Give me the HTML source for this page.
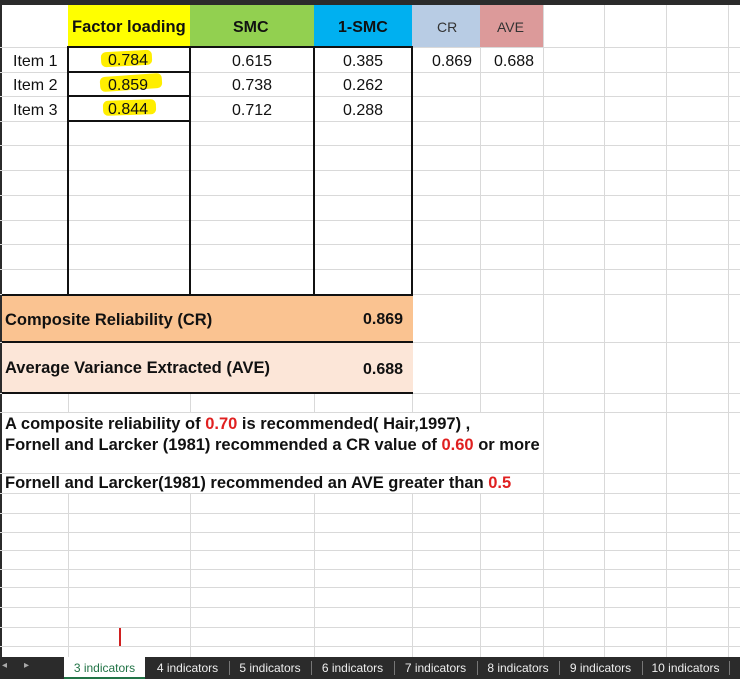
<!DOCTYPE html>
<html><head><style>
body{margin:0;width:740px;height:679px;overflow:hidden;background:#fff;font-family:"Liberation Sans",Arial,sans-serif;position:relative}
.a{position:absolute}
.h{position:absolute;left:0;width:740px;height:1px;background:#d9d9d9}
.v{position:absolute;top:5px;width:1px;height:652px;background:#d9d9d9}
.t{position:absolute;font-size:16px;color:#111;white-space:nowrap}
.b{font-weight:bold}
.r{color:#e02020}
.tab{position:absolute;top:660px;font-size:12px;color:#eee;height:19px;line-height:16px;text-align:center}
</style></head><body>
<div class="a" style="left:0;top:0;width:740px;height:5px;background:#2b2b2b"></div>
<div class="a" style="left:0;top:0;width:2px;height:660px;background:#2b2b2b"></div>
<div class="h" style="top:47px"></div><div class="h" style="top:72px"></div><div class="h" style="top:96px"></div><div class="h" style="top:121px"></div><div class="h" style="top:145px"></div><div class="h" style="top:170px"></div><div class="h" style="top:195px"></div><div class="h" style="top:220px"></div><div class="h" style="top:244px"></div><div class="h" style="top:269px"></div><div class="h" style="top:294px"></div><div class="h" style="top:342px"></div><div class="h" style="top:393px"></div><div class="h" style="top:412px"></div><div class="h" style="top:473px"></div><div class="h" style="top:493px"></div><div class="h" style="top:513px"></div><div class="h" style="top:532px"></div><div class="h" style="top:550px"></div><div class="h" style="top:569px"></div><div class="h" style="top:587px"></div><div class="h" style="top:607px"></div><div class="h" style="top:627px"></div><div class="h" style="top:646px"></div>
<div class="v" style="left:68px"></div><div class="v" style="left:190px"></div><div class="v" style="left:314px"></div><div class="v" style="left:412px"></div><div class="v" style="left:480px"></div><div class="v" style="left:543px"></div><div class="v" style="left:604px"></div><div class="v" style="left:666px"></div><div class="v" style="left:728px"></div>
<div class="a" style="left:68px;top:5px;width:122px;height:42px;background:#ffff00"></div>
<div class="a" style="left:190px;top:5px;width:124px;height:42px;background:#92d050"></div>
<div class="a" style="left:314px;top:5px;width:98px;height:42px;background:#00b0f0"></div>
<div class="a" style="left:412px;top:5px;width:68px;height:42px;background:#b8cce4"></div>
<div class="a" style="left:480px;top:5px;width:63px;height:42px;background:#dc9a9a"></div>
<div class="t b" style="left:72px;top:18px;font-size:16.5px">Factor loading</div>
<div class="t b" style="left:233px;top:19px">SMC</div>
<div class="t b" style="left:338px;top:19px">1-SMC</div>
<div class="t" style="left:437px;top:19px;font-size:14px;color:#333">CR</div>
<div class="t" style="left:497px;top:19px;font-size:14px;color:#333">AVE</div>
<div class="a" style="left:67px;top:46px;width:346px;height:2px;background:#111"></div>
<div class="a" style="left:67px;top:46px;width:2px;height:249px;background:#111"></div>
<div class="a" style="left:189px;top:46px;width:2px;height:249px;background:#111"></div>
<div class="a" style="left:313px;top:46px;width:2px;height:249px;background:#111"></div>
<div class="a" style="left:411px;top:46px;width:2px;height:249px;background:#111"></div>
<div class="a" style="left:67px;top:71px;width:124px;height:2px;background:#111"></div>
<div class="a" style="left:67px;top:95px;width:124px;height:2px;background:#111"></div>
<div class="a" style="left:67px;top:120px;width:124px;height:2px;background:#111"></div>
<div class="a" style="left:101px;top:51px;width:51px;height:15px;background:#ffee00;border-radius:5px;transform:rotate(-3deg)"></div>
<div class="a" style="left:100px;top:75px;width:62px;height:15px;background:#ffee00;border-radius:5px;transform:rotate(-4deg)"></div>
<div class="a" style="left:103px;top:100px;width:53px;height:15px;background:#ffee00;border-radius:5px;transform:rotate(-2deg)"></div>
<div class="t" style="left:13px;top:53px">Item 1</div>
<div class="t" style="left:13px;top:77px">Item 2</div>
<div class="t" style="left:13px;top:102px">Item 3</div>
<div class="t" style="left:108px;top:52px">0.784</div>
<div class="t" style="left:108px;top:77px">0.859</div>
<div class="t" style="left:108px;top:101px">0.844</div>
<div class="t" style="left:232px;top:53px">0.615</div>
<div class="t" style="left:232px;top:77px">0.738</div>
<div class="t" style="left:232px;top:102px">0.712</div>
<div class="t" style="left:343px;top:53px">0.385</div>
<div class="t" style="left:343px;top:77px">0.262</div>
<div class="t" style="left:343px;top:102px">0.288</div>
<div class="t" style="left:432px;top:53px">0.869</div>
<div class="t" style="left:494px;top:53px">0.688</div>
<div class="a" style="left:2px;top:295px;width:411px;height:47px;background:#fac391"></div>
<div class="a" style="left:2px;top:343px;width:411px;height:49px;background:#fce6d8"></div>
<div class="a" style="left:2px;top:294px;width:411px;height:2px;background:#111"></div>
<div class="a" style="left:2px;top:341px;width:411px;height:2px;background:#111"></div>
<div class="a" style="left:2px;top:392px;width:411px;height:2px;background:#111"></div>
<div class="t b" style="left:5px;top:311px;font-size:16.5px">Composite Reliability (CR)</div>
<div class="t b" style="left:363px;top:311px">0.869</div>
<div class="t b" style="left:5px;top:359px;font-size:16.5px">Average Variance Extracted (AVE)</div>
<div class="t b" style="left:363px;top:361px">0.688</div>
<div class="a" style="left:2px;top:413px;width:541px;height:60px;background:#fff"></div>
<div class="a" style="left:2px;top:474px;width:541px;height:19px;background:#fff"></div>
<div class="t b" style="left:5px;top:415px;font-size:16.5px">A composite reliability of <span class="r">0.70</span> is recommended( Hair,1997) ,</div>
<div class="t b" style="left:5px;top:436px;font-size:16.5px">Fornell and Larcker (1981) recommended a CR value of <span class="r">0.60</span> or more</div>
<div class="t b" style="left:5px;top:474px;font-size:16.5px">Fornell and Larcker(1981) recommended an AVE greater than <span class="r">0.5</span></div>
<div class="a" style="left:119px;top:628px;width:2px;height:18px;background:#d02020"></div>
<div class="a" style="left:0;top:657px;width:740px;height:22px;background:#2b2b2b"></div>
<div class="t" style="left:2px;top:660px;font-size:10px;color:#aaa">◂</div>
<div class="t" style="left:24px;top:660px;font-size:10px;color:#aaa">▸</div>
<div class="a" style="left:64px;top:657px;width:81px;height:22px;background:#fff;border-bottom:2px solid #217346;box-sizing:border-box"></div>
<div class="tab" style="left:64px;width:81px;color:#217346">3 indicators</div>
<div class="tab" style="left:146px;width:83px">4 indicators</div>
<div class="tab" style="left:229px;width:82px">5 indicators</div>
<div class="tab" style="left:311px;width:83px">6 indicators</div>
<div class="tab" style="left:394px;width:83px">7 indicators</div>
<div class="tab" style="left:477px;width:82px">8 indicators</div>
<div class="tab" style="left:559px;width:83px">9 indicators</div>
<div class="tab" style="left:642px;width:87px">10 indicators</div>
<div class="a" style="left:229px;top:661px;width:1px;height:14px;background:#777"></div>
<div class="a" style="left:311px;top:661px;width:1px;height:14px;background:#777"></div>
<div class="a" style="left:394px;top:661px;width:1px;height:14px;background:#777"></div>
<div class="a" style="left:477px;top:661px;width:1px;height:14px;background:#777"></div>
<div class="a" style="left:559px;top:661px;width:1px;height:14px;background:#777"></div>
<div class="a" style="left:642px;top:661px;width:1px;height:14px;background:#777"></div>
<div class="a" style="left:729px;top:661px;width:1px;height:14px;background:#777"></div>
</body></html>
